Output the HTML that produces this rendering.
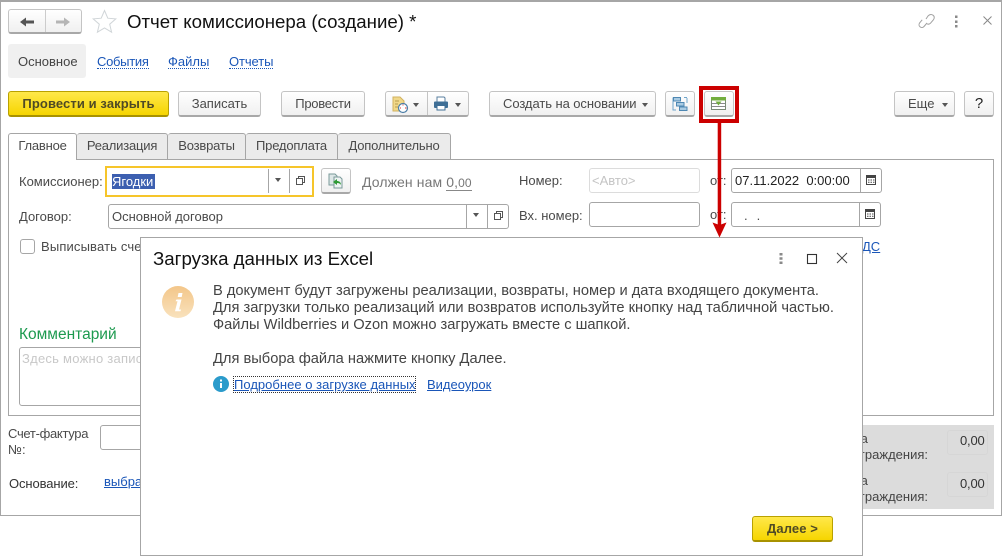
<!DOCTYPE html>
<html lang="ru"><head><meta charset="utf-8"><title>Отчет комиссионера</title>
<style>
*{box-sizing:border-box}
html,body{margin:0;padding:0;background:#fff}
body{width:1002px;height:556px;position:relative;overflow:hidden;font-family:"Liberation Sans",sans-serif;font-size:13px;color:#4a4a4a}
.a,.t,.b,.f{position:absolute}
.t{white-space:nowrap;line-height:14px}
.b{background:linear-gradient(#fff,#f0f0f0);border:1px solid #c4c4c4;border-bottom:2px solid #a8a8a8;border-radius:3px;text-align:center;line-height:24px;white-space:nowrap}
.f{background:#fff;border:1px solid #a6a6a6;border-radius:3px}
.lnk{color:#1a56b8;border-bottom:1px dotted #1a56b8;line-height:13px}
.ul{color:#1a56b8;text-decoration:underline}
.tab{position:absolute;top:133px;height:26px;background:#ebebeb;border:1px solid #a6a6a6;border-bottom:0;border-left:0;border-radius:3px 3px 0 0;text-align:center;line-height:23px;letter-spacing:-.2px}
.dv{position:absolute;width:1px;background:#a6a6a6}
.tri{position:absolute;width:0;height:0;border-left:3.5px solid transparent;border-right:3.5px solid transparent;border-top:4px solid #555}
svg{position:absolute;overflow:visible}
</style></head><body>
<!-- main window -->
<div class="a" style="left:0;top:0;width:1002px;height:516px;border:1px solid #a6a6a6;border-width:2px 1px 1px 1px"></div>

<!-- nav -->
<div class="b" style="left:8px;top:9px;width:74px;height:25px"></div>
<div class="dv" style="left:45px;top:10px;height:22px;background:#ccc"></div>
<svg style="left:0;top:0" width="130" height="40"><path d="M20 22l6-4.500v3h8v3h-8v3z" fill="#555"/><path d="M70 22l-6-4.500v3h-8v3h8v3z" fill="#b5b5b5"/><path d="M104.500 10.500l3.300 7.700 8 .7-6.100 5.300 1.900 8-7.100-4.300-7.100 4.300 1.900-8-6.100-5.300 8-.7z" fill="#fff" stroke="#d0d5d8"/></svg>
<div class="t" style="left:127px;top:11px;font-size:18.67px;line-height:21px;color:#111">Отчет комиссионера (создание) *</div>
<svg style="left:918px;top:13px" width="20" height="18"><path d="M8 6l2-3c1.500-1.600 3.500-1.800 5-.8s1.600 3 .5 4.500l-3 3.500c-1 1-2.300 1.200-3.300.6M9 10l-3 3.500c-1.300 1.300-3 1.200-4 .3-1.200-1-1.300-2.700-.3-4l2.500-3" fill="none" stroke="#a0a0a0" stroke-width="1"/></svg>
<svg style="left:951px;top:14px" width="10" height="14"><path d="M4 1.500h2.500v2.500H4zM4 6.500h2.500v2.500H4zM4 11h2.500v2.500H4z" fill="#8a8a8a"/></svg>
<svg style="left:982px;top:15px" width="12" height="12"><path d="M1.500 1.500l8 8m0-8l-8 8" stroke="#888" stroke-width="1"/></svg>

<div class="a" style="left:8px;top:44px;width:78px;height:34px;background:#f0f0f0;border-radius:3px"></div>
<div class="t" style="left:18px;top:55px;color:#444">Основное</div>
<div class="t lnk" style="left:97px;top:55px;letter-spacing:-.3px">События</div>
<div class="t lnk" style="left:168px;top:55px">Файлы</div>
<div class="t lnk" style="left:229px;top:55px;letter-spacing:-.1px">Отчеты</div>

<!-- toolbar -->
<div class="b" style="left:8px;top:91px;width:161px;height:26px;background:linear-gradient(#ffe84a,#f6d500);border-color:#b9a100;border-bottom-color:#a89200;font-weight:bold;color:#4f4a25;letter-spacing:.1px">Провести и закрыть</div>
<div class="b" style="left:178px;top:91px;width:83px;height:26px">Записать</div>
<div class="b" style="left:281px;top:91px;width:84px;height:26px;letter-spacing:-.25px">Провести</div>
<div class="b" style="left:385px;top:91px;width:84px;height:26px"></div>
<div class="dv" style="left:427px;top:92px;height:23px;background:#c4c4c4"></div>
<svg style="left:392px;top:96px" width="32" height="18"><path d="M1 1h7l4 4v10H1z" fill="#f0d88a" stroke="#d2b25f"/><path d="M3 5h4M3 8h3M3 11h3" stroke="#b99b4e"/><circle cx="11" cy="12" r="4.500" fill="#fff" stroke="#4d7fa8" stroke-width="1.200"/><path d="M11 8.500v1M8 12h1M13 12h1.500" stroke="#d33"/></svg>
<svg style="left:433px;top:96px" width="16" height="16"><path d="M4 1h7l1 1v4H4z" fill="#fff" stroke="#5a7f9f"/><rect x="1" y="5.500" width="14" height="6.500" rx="1" fill="#3f6f96"/><rect x="4" y="9.500" width="8" height="4.500" fill="#fff" stroke="#3f6f96"/></svg>
<div class="tri" style="left:413px;top:103px"></div><div class="tri" style="left:455px;top:103px"></div>
<div class="b" style="left:489px;top:91px;width:167px;height:26px;text-align:left;padding-left:13px;letter-spacing:-.07px">Создать на основании</div>
<div class="tri" style="left:642px;top:103px"></div>
<div class="b" style="left:665px;top:91px;width:30px;height:26px"></div>
<svg style="left:672px;top:96px" width="16" height="16"><path d="M1 1.500v12.500h3M15 2v5M12 1.500h3M1 1.500h1" fill="none" stroke="#6fa5cb"/><rect x="1.500" y="1.500" width="7" height="3.500" fill="#a9cbe3" stroke="#4f88b3"/><rect x="4.500" y="6.500" width="7.500" height="3.500" fill="#a9cbe3" stroke="#4f88b3"/><rect x="7.500" y="11" width="7.500" height="3.500" fill="#a9cbe3" stroke="#4f88b3"/></svg>
<div class="b" style="left:704px;top:91px;width:30px;height:26px"></div>
<svg style="left:711px;top:97px" width="16" height="14"><rect x=".5" y=".5" width="14" height="12" fill="#fff" stroke="#7a8a75"/><rect x="0" y="0" width="15" height="3.500" fill="#72ad3d"/><path d="M1 6.500h13M1 9.500h13" stroke="#8a8a8a"/><path d="M4.500 4.500h6L7.500 8.500z" fill="#72ad3d"/></svg>
<div class="b" style="left:894px;top:91px;width:61px;height:26px;text-align:left;padding-left:13px">Еще</div>
<div class="tri" style="left:942px;top:103px"></div>
<div class="b" style="left:964px;top:91px;width:30px;height:26px;font-size:15px;color:#222">?</div>

<!-- tabs -->
<div class="a" style="left:8px;top:159px;width:986px;height:257px;border:1px solid #a6a6a6"></div>
<div class="tab" style="left:8px;width:69px;background:#fff;border-left:1px solid #a6a6a6;height:27px">Главное</div>
<div class="tab" style="left:77px;width:91px">Реализация</div>
<div class="tab" style="left:168px;width:78px">Возвраты</div>
<div class="tab" style="left:246px;width:92px">Предоплата</div>
<div class="tab" style="left:338px;width:113px">Дополнительно</div>

<!-- row 1 -->
<div class="t" style="left:19px;top:175px">Комиссионер:</div>
<div class="a" style="left:105px;top:166px;width:209px;height:31px;border:2px solid #f6c52a;background:#fff"></div>
<div class="a" style="left:112px;top:174px;width:43px;height:15px;background:#3c5fb0"></div>
<div class="t" style="left:112px;top:175px;color:#fff">Ягодки</div>
<div class="dv" style="left:268px;top:169px;height:24px"></div><div class="dv" style="left:289px;top:169px;height:24px"></div>
<div class="tri" style="left:275px;top:178px"></div>
<svg style="left:296px;top:176px" width="10" height="10"><path d="M2.500 2.500V.5h6v6h-2M.5 2.500h6v6h-6z" fill="none" stroke="#555"/></svg>
<div class="b" style="left:321px;top:168px;width:30px;height:26px"></div>
<svg style="left:328px;top:173px" width="16" height="16"><path d="M1 1h6l2 2v9H1z" fill="#dde7e7" stroke="#7a9a9a"/><path d="M6 4h6l2 2v9H6z" fill="#eef3f3" stroke="#7a9a9a"/><path d="M13 12c0-3-2-4-4-4V6L5 9l4 3v-2c2 0 3 .5 4 2z" fill="#2f9a35"/></svg>
<div class="t" style="left:362px;top:174px;font-size:14px;line-height:16px;color:#777;letter-spacing:.1px">Должен нам <span style="border-bottom:1px solid #888">0,<span style="font-size:12px">00</span></span></div>
<div class="t" style="left:519px;top:174px">Номер:</div>
<div class="f" style="left:589px;top:168px;width:111px;height:25px;border-color:#dcdcdc"></div>
<div class="t" style="left:592px;top:174px;color:#c4c4c4">&lt;Авто&gt;</div>
<div class="t" style="left:710px;top:174px">от:</div>
<div class="f" style="left:731px;top:168px;width:151px;height:25px"></div>
<div class="dv" style="left:860px;top:169px;height:23px"></div>
<div class="t" style="left:735px;top:174px;color:#222;white-space:pre">07.11.2022  0:00:00</div>
<svg style="left:866px;top:174px" width="11" height="12"><path d="M.5 1.500h9v9h-9z" fill="#fff" stroke="#444"/><path d="M.5 1h9v3h-9z" fill="#444"/><path d="M2 6h1.500M4.500 6H6M7 6h1.500M2 8.300h1.500M4.500 8.300H6M7 8.300h1.500" stroke="#444"/></svg>

<!-- row 2 -->
<div class="t" style="left:19px;top:210px">Договор:</div>
<div class="f" style="left:108px;top:204px;width:401px;height:25px"></div>
<div class="t" style="left:112px;top:210px">Основной договор</div>
<div class="dv" style="left:466px;top:205px;height:23px"></div><div class="dv" style="left:487px;top:205px;height:23px"></div>
<div class="tri" style="left:473px;top:213px"></div>
<svg style="left:494px;top:211px" width="10" height="10"><path d="M2.500 2.500V.5h6v6h-2M.5 2.500h6v6h-6z" fill="none" stroke="#555"/></svg>
<div class="t" style="left:519px;top:209px">Вх. номер:</div>
<div class="f" style="left:589px;top:202px;width:111px;height:25px"></div>
<div class="t" style="left:710px;top:208px">от:</div>
<div class="f" style="left:731px;top:202px;width:150px;height:25px"></div>
<div class="dv" style="left:859px;top:203px;height:23px"></div>
<div class="t" style="left:744px;top:209px;letter-spacing:.6px;white-space:pre">.  .</div>
<svg style="left:865px;top:208px" width="11" height="12"><path d="M.5 1.500h9v9h-9z" fill="#fff" stroke="#444"/><path d="M.5 1h9v3h-9z" fill="#444"/><path d="M2 6h1.500M4.500 6H6M7 6h1.500M2 8.300h1.500M4.500 8.300H6M7 8.300h1.500" stroke="#444"/></svg>

<!-- row 3 -->
<div class="a" style="left:20px;top:239px;width:15px;height:15px;border:1px solid #a6a6a6;border-radius:3px"></div>
<div class="t" style="left:41px;top:240px;letter-spacing:.15px">Выписывать счет-фактуру</div>
<div class="t ul" style="left:862px;top:240px">ДС</div>

<!-- comment -->
<div class="t" style="left:19px;top:326px;font-size:15.500px;line-height:18px;color:#1d9a4f">Комментарий</div>
<div class="f" style="left:19px;top:347px;width:300px;height:59px"></div>
<div class="t" style="left:22px;top:352px;color:#c8c8c8;letter-spacing:.25px">Здесь можно записать</div>

<!-- bottom -->
<div class="t" style="left:8px;top:427px;letter-spacing:-.3px">Счет-фактура</div>
<div class="t" style="left:8px;top:443px">№:</div>
<div class="f" style="left:100px;top:425px;width:100px;height:25px"></div>
<div class="t" style="left:9px;top:477px;color:#333;letter-spacing:-.1px">Основание:</div>
<div class="t ul" style="left:104px;top:475px">выбрать</div>

<div class="a" style="left:800px;top:425px;width:194px;height:84px;background:#dcdcdc"></div>
<div class="a" style="left:947px;top:430px;width:41px;height:25px;border:1px solid #d6d6d6;border-radius:3px;background:#dcdcdc"></div>
<div class="a" style="left:947px;top:472px;width:41px;height:25px;border:1px solid #d6d6d6;border-radius:3px;background:#dcdcdc"></div>
<div class="t" style="left:827px;top:432px;color:#444">Сумма</div>
<div class="t" style="right:74px;top:448px;color:#444">вознаграждения:</div>
<div class="t" style="left:827px;top:474px;color:#444">Сумма</div>
<div class="t" style="right:74px;top:490px;color:#444">вознаграждения:</div>
<div class="t" style="left:960px;top:434px;color:#333;letter-spacing:-.2px">0,00</div>
<div class="t" style="left:960px;top:477px;color:#333;letter-spacing:-.2px">0,00</div>

<!-- dialog -->
<div class="a" style="left:140px;top:237px;width:723px;height:319px;background:#fff;border:1px solid #a6a6a6"></div>
<div class="t" style="left:153px;top:249px;font-size:18.67px;line-height:20px;color:#111">Загрузка данных из Excel</div>
<svg style="left:776px;top:252px" width="10" height="13"><path d="M3.500 1h3v2.500h-3zM3.500 5.300h3v2.500h-3zM3.500 9.500h3V12h-3z" fill="#8a8a8a"/></svg>
<svg style="left:806px;top:253px" width="11" height="11"><rect x="1.500" y="1.500" width="9" height="9" fill="none" stroke="#333" stroke-width="1.100"/></svg>
<svg style="left:836px;top:252px" width="12" height="12"><path d="M1 1l10 10M11 1L1 11" stroke="#444" stroke-width="1"/></svg>

<svg style="left:162px;top:286px" width="32" height="32"><defs><linearGradient id="g" x1="0" y1="0" x2="0" y2="1"><stop offset="0" stop-color="#f3c689"/><stop offset="1" stop-color="#f9e2bd"/></linearGradient></defs><circle cx="16" cy="16" r="16" fill="url(#g)"/><path d="M14.500 13.500h5l-2.500 10h2l-.5 1.800h-5.500l2.500-10h-2zM16.500 7h4l-.8 4h-4z" fill="#fff"/></svg>

<div class="t" style="left:213px;top:283px;font-size:14.670px;line-height:17px;color:#444">В документ будут загружены реализации, возвраты, номер и дата входящего документа.<br>Для загрузки только реализаций или возвратов используйте кнопку над табличной частью.<br>Файлы Wildberries и Ozon можно загружать вместе с шапкой.<br><br>Для выбора файла нажмите кнопку Далее.</div>

<svg style="left:213px;top:376px" width="16" height="16"><circle cx="8" cy="8" r="8" fill="#2b9bcb"/><path d="M7 7h2v5H7zM7 3.500h2v2H7z" fill="#fff"/></svg>
<div class="a" style="left:233px;top:376px;width:183px;height:17px;border:1px dotted #333"></div>
<div class="t ul" style="left:234px;top:378px;letter-spacing:.02px">Подробнее о загрузке данных</div>
<div class="t ul" style="left:427px;top:378px">Видеоурок</div>

<div class="b" style="left:752px;top:516px;width:81px;height:26px;background:linear-gradient(#ffe84a,#f6d500);border-color:#b9a100;border-bottom-color:#a89200;font-weight:bold;color:#4f4a25;letter-spacing:.1px">Далее &gt;</div>

<!-- annotation -->
<div class="a" style="left:699px;top:86px;width:40px;height:37px;border:4px solid #cc0000"></div>
<svg style="left:0;top:0" width="1002" height="556"><path d="M717.700 123h3.500v102h-3.500z" fill="#cc0000"/><path d="M712.500 222.500l7 2.500 7-2.500-7 15z" fill="#cc0000"/></svg>
</body></html>
